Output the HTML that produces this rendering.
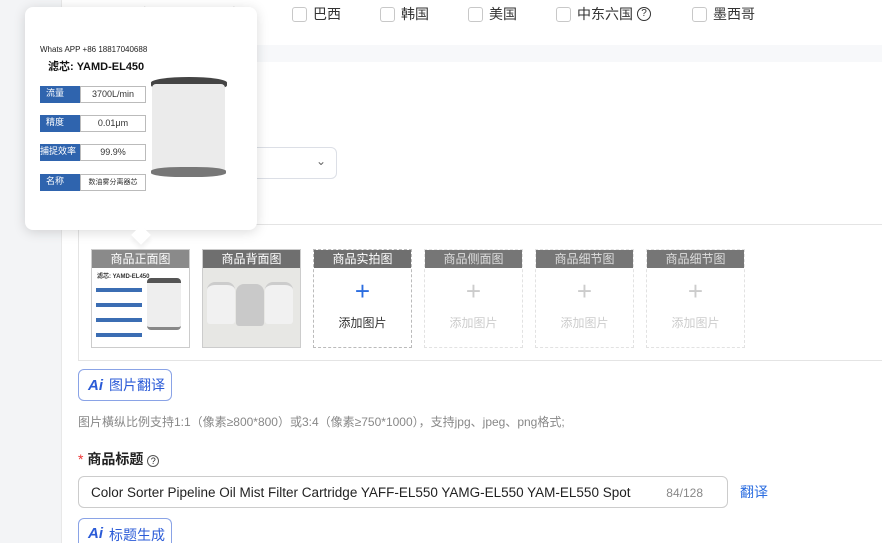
<!DOCTYPE html>
<html style="width:882px;height:543px;overflow:hidden"><head><meta charset="utf-8"><style>
*{box-sizing:border-box;margin:0;padding:0}
body{width:882px;height:543px;overflow:hidden;background:#f3f4f6;font-family:"Liberation Sans","Noto Sans CJK SC",sans-serif;position:relative;color:#333}
.abs{position:absolute}
.panel{left:61px;top:0;width:821px;height:543px;background:#fff;border-left:1px solid #e8e8e8}
.cb{position:absolute;top:4px;font-size:14px;color:#333;display:flex;align-items:center}
.cb i{display:inline-block;width:15px;height:15px;border:1px solid #c8c8c8;border-radius:3px;margin-right:6px}
.slot{position:absolute;top:249px;width:99px;height:99px}
.slot .h{height:18px;background:#6f6f6f;color:#fff;font-size:12px;text-align:center;line-height:18px}
.slot.d{border:1px dashed #bbb}
.slot.dl{border:1px dashed #e2e2e2}
.slot.dl .h{background:#767676;color:#ddd}
.plus{text-align:center;font-size:26px;line-height:26px;margin-top:10px;font-weight:300}
.add{text-align:center;font-size:12px;margin-top:10px}
.btn{position:absolute;left:78px;width:94px;height:32px;border:1px solid #8aa3e6;border-radius:6px;color:#2b5bd7;font-size:14px;display:flex;align-items:center;padding-left:9px;overflow:hidden}
.btn b{font-style:italic;font-weight:900;margin-right:6px;font-size:15px}
</style></head><body>
<div class="abs panel"></div>
<div class="abs" style="left:62px;top:45px;width:820px;height:17px;background:#f7f8fa"></div>
<div class="cb" style="left:102px"><i></i>西班牙</div>
<div class="cb" style="left:204px"><i></i>法国</div>
<div class="cb" style="left:292px"><i></i>巴西</div>
<div class="cb" style="left:380px"><i></i>韩国</div>
<div class="cb" style="left:468px"><i></i>美国</div>
<div class="cb" style="left:556px"><i></i>中东六国 <span style="display:inline-block;width:14px;height:14px;border:1px solid #333;border-radius:50%;font-size:10px;line-height:12px;text-align:center;margin-left:4px">?</span></div>
<div class="cb" style="left:692px"><i></i>墨西哥</div>
<div class="abs" style="left:220px;top:147px;width:117px;height:32px;border:1px solid #dcdfe6;border-radius:6px"><span style="position:absolute;right:10px;top:6px;font-size:12px;color:#666">⌄</span></div>
<div class="abs" style="left:78px;top:224px;width:804px;height:137px;border-top:1px solid #e4e4e4;border-bottom:1px solid #e4e4e4;border-left:1px solid #e4e4e4"></div>
<div class="slot" style="left:91px;border:1px solid #ccc"><div class="h" style="background:#8a8a8a">商品正面图</div>
<div style="position:relative;height:79px;background:#fff"><div style="position:absolute;left:5px;top:3px;font-size:6px;font-weight:bold">滤芯: YAMD-EL450</div>
<div style="position:absolute;left:4px;top:14px;width:46px;height:60px;background:repeating-linear-gradient(#fff 0 6px,#3b6db3 6px 10px,#fff 10px 15px)"></div>
<div style="position:absolute;left:55px;top:10px;width:34px;height:52px;background:#eee;border-top:5px solid #555;border-bottom:3px solid #888;border-radius:4px"></div></div></div>
<div class="slot" style="left:202px;border:1px solid #ccc"><div class="h">商品背面图</div>
<div style="position:relative;height:79px;background:#e7e7e4">
<div style="position:absolute;left:4px;top:14px;width:28px;height:42px;background:#f1f1f1;border-radius:8px 8px 3px 3px;border-top:3px solid #ccc"></div>
<div style="position:absolute;left:33px;top:16px;width:28px;height:42px;background:#c9c9c9;border-radius:8px 8px 3px 3px"></div>
<div style="position:absolute;left:62px;top:14px;width:28px;height:42px;background:#f1f1f1;border-radius:8px 8px 3px 3px;border-top:3px solid #ccc"></div></div></div>
<div class="slot d" style="left:313px"><div class="h">商品实拍图</div><div class="plus" style="color:#2b6de0">+</div><div class="add" style="color:#333">添加图片</div></div>
<div class="slot dl" style="left:424px"><div class="h">商品侧面图</div><div class="plus" style="color:#ccc">+</div><div class="add" style="color:#ccc">添加图片</div></div>
<div class="slot dl" style="left:535px"><div class="h">商品细节图</div><div class="plus" style="color:#ccc">+</div><div class="add" style="color:#ccc">添加图片</div></div>
<div class="slot dl" style="left:646px"><div class="h">商品细节图</div><div class="plus" style="color:#ccc">+</div><div class="add" style="color:#ccc">添加图片</div></div>
<div class="btn" style="top:369px"><b>Ai</b>图片翻译</div>
<div class="abs" style="left:78px;top:413px;font-size:12px;color:#888">图片橫纵比例支持1:1（像素≥800*800）或3:4（像素≥750*1000），支持jpg、jpeg、png格式;</div>
<div class="abs" style="left:78px;top:449px;font-size:14px;font-weight:bold;color:#222"><span style="color:#e33;font-weight:normal">*</span> 商品标题 <span style="display:inline-block;width:12px;height:12px;border:1px solid #555;border-radius:50%;font-size:9px;line-height:10px;text-align:center;font-weight:normal">?</span></div>
<div class="abs" style="left:78px;top:476px;width:650px;height:32px;border:1px solid #ccc;border-radius:6px;font-size:13.5px;color:#222;padding:8px 12px;white-space:nowrap">Color Sorter Pipeline Oil Mist Filter Cartridge YAFF-EL550 YAMG-EL550 YAM-EL550 Spot<span style="position:absolute;right:24px;top:9px;font-size:12px;color:#888">84/128</span></div>
<div class="abs" style="left:740px;top:482px;font-size:14px;color:#2b6de0">翻译</div>
<div class="btn" style="top:518px;height:25px;border-bottom:none;border-radius:6px 6px 0 0;align-items:flex-start;padding-top:6px"><b>Ai</b>标题生成</div>
<!-- tooltip -->
<div class="abs" style="left:25px;top:7px;width:232px;height:223px;background:#fff;border-radius:8px;box-shadow:0 2px 12px rgba(0,0,0,.15)">
<div class="abs" style="left:15px;top:38px;font-size:8px;color:#222">Whats APP +86 18817040688</div>
<div class="abs" style="left:23px;top:51px;font-size:11px;font-weight:bold;color:#111">滤芯: YAMD-EL450</div>
<div class="abs" style="left:15px;top:79px;font-size:9px;line-height:15px">
<div style="display:flex;margin-bottom:12px"><span style="width:40px;background:#2f64ae;color:#fff;padding-left:6px">流量</span><span style="width:66px;border:1px solid #bbb;text-align:center">3700L/min</span></div>
<div style="display:flex;margin-bottom:12px"><span style="width:40px;background:#2f64ae;color:#fff;padding-left:6px">精度</span><span style="width:66px;border:1px solid #bbb;text-align:center">0.01μm</span></div>
<div style="display:flex;margin-bottom:13px"><span style="width:40px;background:#2f64ae;color:#fff">捕捉效率</span><span style="width:66px;border:1px solid #bbb;text-align:center">99.9%</span></div>
<div style="display:flex"><span style="width:40px;background:#2f64ae;color:#fff;padding-left:6px">名称</span><span style="width:66px;border:1px solid #bbb;text-align:center;font-size:7px">数油雾分离器芯</span></div></div>
<div class="abs" style="left:126px;top:70px;width:76px;height:14px;background:#444;border-radius:50%/40%"></div>
<div class="abs" style="left:127px;top:77px;width:73px;height:90px;background:#ebebeb;border-radius:4px"></div>
<div class="abs" style="left:126px;top:160px;width:75px;height:10px;background:#777;border-radius:40%"></div>
</div>
<div class="abs" style="left:134px;top:228px;width:14px;height:14px;background:#fff;transform:rotate(45deg);box-shadow:3px 3px 5px rgba(0,0,0,.06)"></div>
</body></html>
